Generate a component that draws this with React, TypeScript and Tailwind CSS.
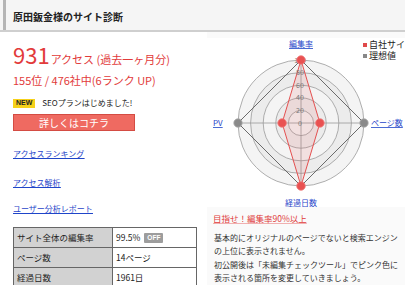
import React from 'react';

const FONT = { fontFamily: '"Noto Sans CJK JP", "Noto Sans", sans-serif' };

function Radar() {
  const cx = 94;
  const cy = 85;
  const R = 63;
  const rings = [5, 4, 3, 2, 1];
  const pt = (axis: number, v: number) => {
    const r = (R * v) / 100;
    if (axis === 0) return [cx, cy - r];
    if (axis === 1) return [cx + r, cy];
    if (axis === 2) return [cx, cy + r];
    return [cx - r, cy];
  };
  const ideal = [100, 100, 100, 100].map((v, i) => pt(i, v));
  const own = [100, 30, 100, 30].map((v, i) => pt(i, v));
  const poly = (p: number[][]) => p.map((q) => q.join(',')).join(' ');
  const link = { fill: '#1f45c9', textDecoration: 'underline', fontSize: 8 } as const;

  return (
    <svg width="198" height="169" viewBox="0 0 198 169" style={FONT}>
      {rings.map((n) => (
        <circle
          key={n}
          cx={cx}
          cy={cy}
          r={(R * n) / 5}
          fill={n % 2 ? '#f4f4f4' : '#ececec'}
          stroke="#9a9a9a"
          strokeWidth="0.8"
        />
      ))}
      <line x1={cx - R} y1={cy} x2={cx + R} y2={cy} stroke="#999" strokeWidth="0.8" />
      <line x1={cx} y1={cy - R} x2={cx} y2={cy + R} stroke="#999" strokeWidth="0.8" />
      <polygon points={poly(ideal)} fill="none" stroke="#6b6b6b" strokeWidth="1" />
      <polygon points={poly(own)} fill="rgba(232,90,90,0.13)" stroke="#e45050" strokeWidth="1" />
      {[100, 80, 60, 40, 20, 0].map((v) => (
        <text key={v} x={cx - 1} y={cy - (R * v) / 100 + 2.5} fontSize="7" fill="#777" textAnchor="middle">
          {v}
        </text>
      ))}
      {[ideal[1], ideal[3]].map((p, i) => (
        <circle key={'g' + i} cx={p[0]} cy={p[1]} r="4.2" fill="#8a8a8a" stroke="#aaa" strokeWidth="0.8" />
      ))}
      {own.map((p, i) => (
        <circle key={'r' + i} cx={p[0]} cy={p[1]} r="4.3" fill="#e95151" stroke="#f08080" strokeWidth="0.8" />
      ))}
      <text x={cx} y="9" textAnchor="middle" style={link}>編集率</text>
      <text x="6" y="88" style={link}>PV</text>
      <text x="164" y="88" style={link}>ページ数</text>
      <text x={cx} y="168" textAnchor="middle" style={link}>経過日数</text>
      <rect x="156" y="5" width="4" height="4" fill="#e04a4a" />
      <text x="162" y="10" fontSize="9" fill="#222">自社サイト</text>
      <rect x="156" y="16" width="4" height="4" fill="#888" />
      <text x="162" y="21" fontSize="9" fill="#222">理想値</text>
    </svg>
  );
}

export default function App() {
  return (
    <div className="w-[405px] h-[285px] overflow-hidden bg-[#fafafa] text-[#222]" style={FONT}>
      {/* Header */}
      <div className="h-[32px] bg-[#f5f5f5] border-b-2 border-[#cfcfcf] pl-[3px]">
        <div className="h-full border-l-[3px] border-[#b5b5b5] flex items-center pl-[7px] pt-[3px]">
          <h1 className="text-[10px] font-bold text-[#222]">原田鈑金様のサイト診断</h1>
        </div>
      </div>

      <div className="flex">
        {/* Left column */}
        <div className="w-[207px] shrink-0 pl-[13px] pr-[9px] pt-[9px] bg-white">
          <div className="flex items-baseline text-[#e23b3b] leading-[26px]">
            <span className="text-[22px]">931</span>
            <span className="text-[11px] ml-[1px]">アクセス (過去一ヶ月分)</span>
          </div>
          <p className="text-[11px] leading-[16px] text-[#e23b3b]">155位 / 476社中(6ランク UP)</p>

          <div className="mt-[10px] flex items-center h-[10px]">
            <span className="bg-[#f6d11a] text-[7px] font-bold leading-[8px] px-[3px] py-[0.5px] text-[#222]" style={{ fontFamily: '"Liberation Sans", sans-serif' }}>
              NEW
            </span>
            <span className="ml-[7px] text-[8px] text-[#222]">SEOプランはじめました!</span>
          </div>

          <button className="mt-[1px] w-[122px] h-[17px] bg-[#ef6a61] border border-[#d44c43] text-white text-[10px] leading-[15px] text-center">
            詳しくはコチラ
          </button>

          <div className="flex flex-col items-start text-[8px] leading-[12px] text-[#1f45c9] underline">
            <a className="mt-[16px]">アクセスランキング</a>
            <a className="mt-[17px]">アクセス解析</a>
            <a className="mt-[14px]">ユーザー分析レポート</a>
          </div>

          <table className="mt-[12px] w-[184px] border-collapse text-[8.5px] text-[#222]">
            <tbody>
              <tr className="h-[20px]">
                <td className="w-[99px] bg-[#d2d2d2] border border-[#666] pl-[3px]">サイト全体の編集率</td>
                <td className="bg-white border border-[#666] pl-[3px]">
                  <span className="flex items-center">
                    99.5%
                    <span className="ml-[4px] bg-[#9d9d9d] text-white text-[6.5px] font-bold leading-[10px] px-[3px] rounded-[1px]" style={{ fontFamily: '"Liberation Sans", sans-serif' }}>
                      OFF
                    </span>
                  </span>
                </td>
              </tr>
              <tr className="h-[20px]">
                <td className="bg-[#d2d2d2] border border-[#666] pl-[3px]">ページ数</td>
                <td className="bg-white border border-[#666] pl-[3px]">14ページ</td>
              </tr>
              <tr className="h-[20px]">
                <td className="bg-[#d2d2d2] border border-[#666] pl-[3px]">経過日数</td>
                <td className="bg-white border border-[#666] pl-[3px]">1961日</td>
              </tr>
            </tbody>
          </table>
        </div>

        {/* Right column */}
        <div className="flex-1 pt-[6px]">
          <div className="h-[169px] bg-white">
            <Radar />
          </div>
          <p className="mt-[5px] ml-[6px] text-[8.5px] leading-[12px] text-[#e03a3a] underline decoration-[#f0b0b0]">
            目指せ！編集率90%以上
          </p>
          <p className="mt-[7px] ml-[7px] text-[8px] leading-[13.4px] text-[#333] whitespace-nowrap">
            基本的にオリジナルのページでないと検索エンジン
            <br />
            の上位に表示されません。
            <br />
            初公開後は「未編集チェックツール」でピンク色に
            <br />
            表示される箇所を変更していきましょう。
          </p>
        </div>
      </div>
    </div>
  );
}
